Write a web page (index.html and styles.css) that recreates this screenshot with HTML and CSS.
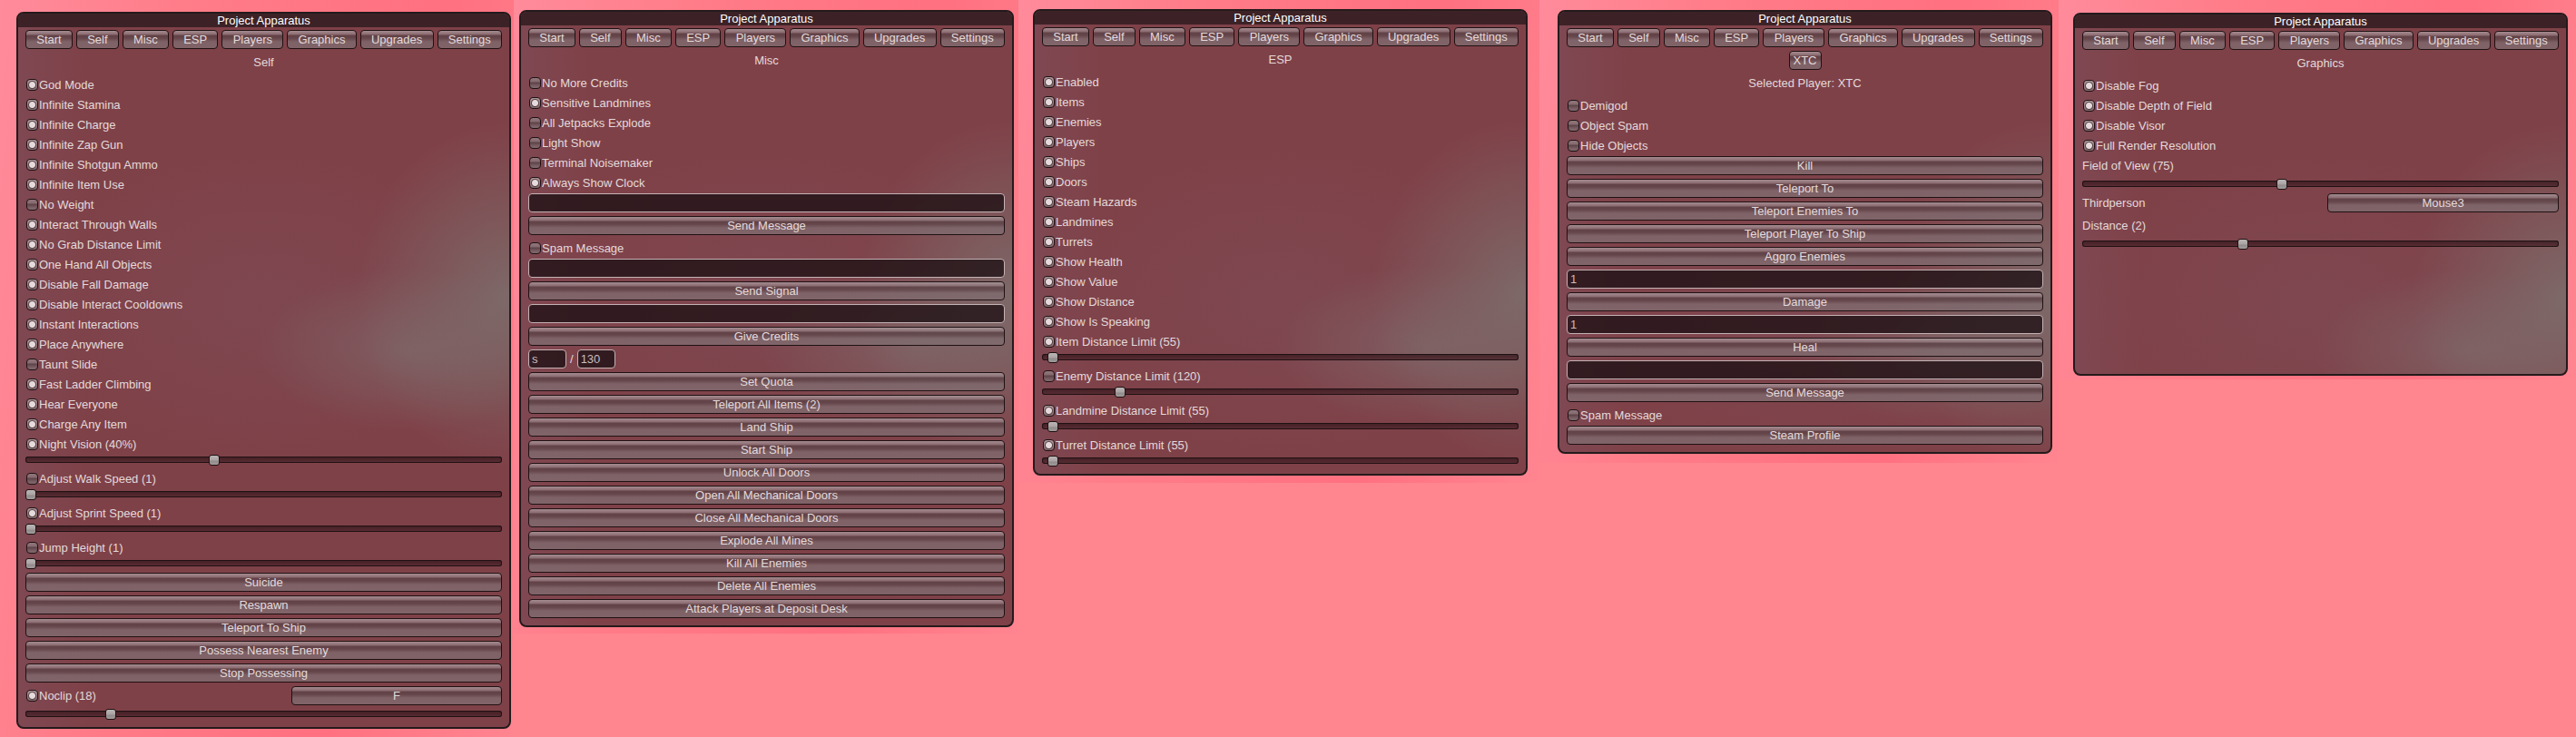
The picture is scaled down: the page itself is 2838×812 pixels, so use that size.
FILE: index.html
```
<!DOCTYPE html>
<html lang="en">
<head>
    <meta charset="UTF-8">
    <meta name="viewport" content="width=device-width, initial-scale=1.0">
    <title>Project Apparatus</title>
    <link rel="stylesheet" href="styles.css">
</head>
<body>
    <main class="gallery" id="gallery"></main>
    <script src="script.js"></script>
</body>
</html>
```
FILE: styles.css
```
:root {
    --page: #ff858f;
    --text: #e4dadb;
    --outline: #241a1c;
}

* {
    box-sizing: border-box;
}

body {
    margin: 0;
    min-height: 100vh;
    background: var(--page);
    color: var(--text);
    font-family: "Liberation Sans", Arial, sans-serif;
    font-size: 13px;
    line-height: 15px;
}

.gallery {
    display: flex;
    align-items: flex-start;
}

/* each shot keeps the strip of scenery around its window */
.shot {
    flex: 1 1 545px;
    box-sizing: content-box;
    min-width: 0;
    background: linear-gradient(100deg, #ff8b9b 0%, #ff7c88 30%, #ff7080 70%, #ff8590 100%);
}

.shot-self {
    padding: 13px 3px 9px 18px;
}

.shot-misc {
    padding: 11px 5px 7px 6px;
}

.shot-esp {
    padding: 10px 13px 8px 16px;
}

.shot-players {
    padding: 11px 7px 10px 20px;
}

.shot-graphics {
    padding: 14px 9px 4px 16px;
}

.window {
    border: 2px solid var(--outline);
    border-radius: 8px;
    padding-bottom: 4px;
    overflow: hidden;
    background:
        radial-gradient(ellipse 170px 190px at 100% 310px, rgba(125, 114, 112, 0.8), transparent),
        radial-gradient(ellipse 170px 90px at 80% 370px, rgba(127, 108, 109, 0.65), transparent),
        radial-gradient(ellipse 260px 170px at 50% 320px, rgba(126, 77, 88, 0.55), transparent),
        linear-gradient(90deg, #7f4852 0%, #7f4148 14%, #7f4148 100%);
}

.shot-graphics .window {
    min-height: 400px;
}

.title {
    margin: 0;
    height: 15px;
    background: #3c2226;
    color: #fff;
    font-size: 13px;
    font-weight: normal;
    line-height: 15px;
    text-align: center;
}

.content {
    display: flex;
    flex-direction: column;
    padding: 3px 8px 0;
}

.content > * {
    margin: 0 0 4px;
}

.tabs {
    display: flex;
    gap: 4px;
}

.tabs .btn {
    flex: 1 1 auto;
    padding: 0 10px;
}

.heading,
.label {
    height: 21px;
    font-size: 13px;
    font-weight: normal;
    line-height: 21px;
}

.heading {
    text-align: center;
}

.btn {
    height: 21px;
    padding: 0 4px;
    border: 1px solid #1f1113;
    border-radius: 4px;
    background: linear-gradient(rgba(174, 158, 162, 0.8) 0, rgba(140, 116, 121, 0.8) 4px, rgba(90, 66, 70, 0.8) 5px, rgba(94, 70, 74, 0.8) 8px, rgba(126, 106, 110, 0.8) 12px, rgba(128, 108, 112, 0.8) 100%);
    color: var(--text);
    font: inherit;
    line-height: 19px;
    cursor: pointer;
}

.btn:hover {
    color: #fff;
}

.btn-small {
    align-self: center;
}

.content > .toggle {
    margin-bottom: 1px;
}

.toggle {
    display: flex;
    align-items: center;
    gap: 1px;
    height: 21px;
    padding-left: 1px;
}

.toggle input {
    appearance: none;
    width: 13px;
    height: 13px;
    margin: 0;
    border: 1px solid #1f1113;
    border-radius: 4px;
    background: linear-gradient(#93777c 0, #846a6e 4px, #5c4246 5px, #7c6267 9px, #80686c 100%);
}

.toggle input:checked {
    background:
        radial-gradient(circle at 50% 50%, #e6dadc 0, #e6dadc 3px, rgba(60, 40, 44, 0.7) 4px, transparent 5px),
        linear-gradient(#b09a9e, #80686c);
}

.field {
    height: 21px;
    min-width: 0;
    padding: 0 3px;
    border: 1px solid #c4b2b5;
    border-radius: 4px;
    background: rgba(31, 18, 21, 0.8);
    color: #c9bdbf;
    font: inherit;
}

.quota {
    display: flex;
    gap: 4px;
    line-height: 21px;
}

.quota .field {
    width: 42px;
}

.bind {
    display: grid;
    grid-template-columns: 1fr 232px;
    gap: 4px;
}

.bind-wide {
    grid-template-columns: 1fr 255px;
}

.content > .slider {
    margin-bottom: 5px;
}

.slider {
    appearance: none;
    width: 100%;
    height: 11px;
    background: none;
}

.slider::-webkit-slider-runnable-track {
    height: 7px;
    border-radius: 3px;
    background: linear-gradient(rgba(50, 22, 27, 0.8), rgba(82, 40, 46, 0.8));
    box-shadow: inset 0 0 0 1px #1f1113;
}

.slider::-webkit-slider-thumb {
    appearance: none;
    width: 12px;
    height: 12px;
    margin-top: -2px;
    border: 1px solid #1f1113;
    border-radius: 3px;
    background: linear-gradient(#bcb6b6 0, #aaa3a4 5px, #918a8b 6px, #a39c9d 100%);
}
```
FILE: script.js
```
const tabs = ['Start', 'Self', 'Misc', 'ESP', 'Players', 'Graphics', 'Upgrades', 'Settings'];

const heading = (text) => `<h2 class="heading">${text}</h2>`;
const button = (text) => `<button type="button" class="btn">${text}</button>`;
const buttons = (...names) => names.map(button).join('');
const toggle = (text, on = true) => `
    <label class="toggle"><input type="checkbox" ${on ? 'checked' : ''}><span>${text}</span></label>`;
const slider = (name, min, max, value) => `
    <input type="range" class="slider" aria-label="${name}" min="${min}" max="${max}" value="${value}">`;
const field = (name, value = '') => `
    <input type="text" class="field" aria-label="${name}" value="${value}">`;

const windows = {
    self: [
        heading('Self'),
        toggle('God Mode'),
        toggle('Infinite Stamina'),
        toggle('Infinite Charge'),
        toggle('Infinite Zap Gun'),
        toggle('Infinite Shotgun Ammo'),
        toggle('Infinite Item Use'),
        toggle('No Weight', false),
        toggle('Interact Through Walls'),
        toggle('No Grab Distance Limit'),
        toggle('One Hand All Objects'),
        toggle('Disable Fall Damage'),
        toggle('Disable Interact Cooldowns'),
        toggle('Instant Interactions'),
        toggle('Place Anywhere'),
        toggle('Taunt Slide', false),
        toggle('Fast Ladder Climbing'),
        toggle('Hear Everyone'),
        toggle('Charge Any Item'),
        toggle('Night Vision (40%)'),
        slider('Night Vision', 1, 100, 40),
        toggle('Adjust Walk Speed (1)', false),
        slider('Walk Speed', 1, 20, 1),
        toggle('Adjust Sprint Speed (1)'),
        slider('Sprint Speed', 1, 20, 1),
        toggle('Jump Height (1)', false),
        slider('Jump Height', 1, 20, 1),
        buttons('Suicide', 'Respawn', 'Teleport To Ship', 'Possess Nearest Enemy', 'Stop Possessing'),
        `<div class="bind">${toggle('Noclip (18)')}${button('F')}</div>`,
        slider('Noclip', 1, 100, 18)
    ],
    misc: [
        heading('Misc'),
        toggle('No More Credits', false),
        toggle('Sensitive Landmines'),
        toggle('All Jetpacks Explode', false),
        toggle('Light Show', false),
        toggle('Terminal Noisemaker', false),
        toggle('Always Show Clock'),
        field('Message'),
        button('Send Message'),
        toggle('Spam Message', false),
        field('Signal'),
        button('Send Signal'),
        field('Credits'),
        button('Give Credits'),
        `<div class="quota">${field('Quota fulfilled', 's')}<span>/</span>${field('Quota', '130')}</div>`,
        buttons('Set Quota', 'Teleport All Items (2)', 'Land Ship', 'Start Ship', 'Unlock All Doors',
            'Open All Mechanical Doors', 'Close All Mechanical Doors', 'Explode All Mines',
            'Kill All Enemies', 'Delete All Enemies', 'Attack Players at Deposit Desk')
    ],
    esp: [
        heading('ESP'),
        toggle('Enabled'),
        toggle('Items'),
        toggle('Enemies'),
        toggle('Players'),
        toggle('Ships'),
        toggle('Doors'),
        toggle('Steam Hazards'),
        toggle('Landmines'),
        toggle('Turrets'),
        toggle('Show Health'),
        toggle('Show Value'),
        toggle('Show Distance'),
        toggle('Show Is Speaking'),
        toggle('Item Distance Limit (55)'),
        slider('Item Distance', 50, 500, 55),
        toggle('Enemy Distance Limit (120)', false),
        slider('Enemy Distance', 50, 500, 120),
        toggle('Landmine Distance Limit (55)'),
        slider('Landmine Distance', 50, 500, 55),
        toggle('Turret Distance Limit (55)'),
        slider('Turret Distance', 50, 500, 55)
    ],
    players: [
        '<button type="button" class="btn btn-small">XTC</button>',
        heading('Selected Player: XTC'),
        toggle('Demigod', false),
        toggle('Object Spam', false),
        toggle('Hide Objects', false),
        buttons('Kill', 'Teleport To', 'Teleport Enemies To', 'Teleport Player To Ship', 'Aggro Enemies'),
        field('Damage amount', '1'),
        button('Damage'),
        field('Heal amount', '1'),
        button('Heal'),
        field('Player message'),
        button('Send Message'),
        toggle('Spam Message', false),
        button('Steam Profile')
    ],
    graphics: [
        heading('Graphics'),
        toggle('Disable Fog'),
        toggle('Disable Depth of Field'),
        toggle('Disable Visor'),
        toggle('Full Render Resolution'),
        '<label class="label" for="fov">Field of View (75)</label>',
        '<input type="range" class="slider" id="fov" min="50" max="110" value="75">',
        `<div class="bind bind-wide"><span class="label">Thirdperson</span>${button('Mouse3')}</div>`,
        '<label class="label" for="distance">Distance (2)</label>',
        '<input type="range" class="slider" id="distance" min="1" max="4" value="2">'
    ]
};

document.getElementById('gallery').innerHTML = Object.entries(windows).map(([name, rows]) => `
    <div class="shot shot-${name}">
        <section class="window">
            <h1 class="title">Project Apparatus</h1>
            <div class="content">
                <nav class="tabs">${buttons(...tabs)}</nav>
                ${rows.join('')}
            </div>
        </section>
    </div>
`).join('');
```
